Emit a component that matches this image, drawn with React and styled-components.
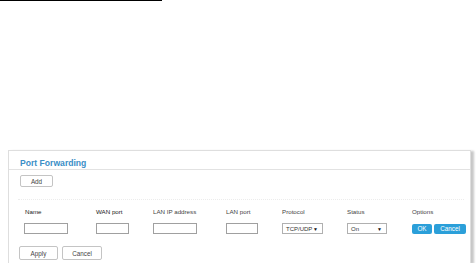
import React from "react";
import styled, { createGlobalStyle } from "styled-components";

const GlobalStyle = createGlobalStyle`
  html, body {
    margin: 0;
    padding: 0;
    background: #ffffff;
    font-family: "Liberation Sans", Arial, sans-serif;
    color: #444;
  }
`;

const TopRule = styled.div`
  width: 162px;
  height: 1px;
  background: #000;
`;

const Panel = styled.section`
  margin: 149px 0 0 8px;
  width: 463px;
  height: 113px;
  box-sizing: border-box;
  border: 1px solid #dedede;
  border-bottom: none;
  box-shadow: 3px 1px 2px rgba(0, 0, 0, 0.22);
  display: flex;
  flex-direction: column;
`;

const PanelHeader = styled.header`
  height: 19px;
  box-sizing: border-box;
  border-bottom: 1px solid #e2e2e2;
  padding: 7px 0 0 11px;
`;

const Title = styled.h2`
  margin: 0;
  font-size: 8.6px;
  line-height: 10px;
  font-weight: 600;
  color: #3a8ec6;
`;

const PanelBody = styled.div`
  display: flex;
  flex-direction: column;
  padding: 5px 0 0 11px;
`;

const Btn = styled.button`
  box-sizing: border-box;
  width: ${(p) => p.$w}px;
  height: ${(p) => p.$h}px;
  padding: 0;
  font-family: "Liberation Sans", Arial, sans-serif;
  font-size: 6.3px;
  color: #444;
  background: #fff;
  border: 1px solid #c4c4c4;
  border-radius: 2px;
`;

const Divider = styled.div`
  margin: 12px 6px 0 -2px;
  border-top: 1px dotted #ececec;
`;

const Grid = styled.div`
  display: grid;
  grid-template-columns: 72px 57px 73px 56px 65px 65px auto;
  grid-template-rows: 8px 11px;
  row-gap: 7px;
  align-items: center;
  margin: 8px 0 0 4px;
`;

const Label = styled.span`
  font-size: 6.2px;
  line-height: 8px;
  color: ${(p) => (p.$strong ? "#222" : "#444")};
  padding-left: ${(p) => (p.$first ? 1 : 0)}px;
`;

const Field = styled.input`
  box-sizing: border-box;
  width: ${(p) => p.$w}px;
  height: 11px;
  padding: 0;
  border: 1px solid #a0a0a0;
  background: #fff;
`;

const Select = styled.div`
  box-sizing: border-box;
  width: ${(p) => p.$w}px;
  height: 11px;
  border: 1px solid #b0b0b0;
  display: flex;
  align-items: center;
  justify-content: space-between;
  padding: 0 4px 0 3px;
  font-size: 6px;
  color: #333;
`;

const Caret = styled.span`
  font-size: 5px;
  color: #111;
`;

const Options = styled.div`
  display: flex;
  gap: 2px;
`;

const BlueBtn = styled.button`
  box-sizing: border-box;
  width: ${(p) => p.$w}px;
  height: 10px;
  padding: 0;
  border: none;
  border-radius: 2px;
  background: #2b9fd9;
  color: #fff;
  font-family: "Liberation Sans", Arial, sans-serif;
  font-size: 6.3px;
`;

const Actions = styled.div`
  display: flex;
  gap: 4px;
  margin: 12px 0 0 -1px;
`;

export default function App() {
  return (
    <>
      <GlobalStyle />
      <TopRule />
      <Panel>
        <PanelHeader>
          <Title>Port Forwarding</Title>
        </PanelHeader>
        <PanelBody>
          <Btn $w={33} $h={12}>Add</Btn>
          <Divider />
          <Grid>
            <Label $first $strong>Name</Label>
            <Label $strong>WAN port</Label>
            <Label>LAN IP address</Label>
            <Label>LAN port</Label>
            <Label>Protocol</Label>
            <Label>Status</Label>
            <Label>Options</Label>
            <Field $w={44} />
            <Field $w={33} />
            <Field $w={44} />
            <Field $w={32} />
            <Select $w={41}>
              TCP/UDP <Caret>▼</Caret>
            </Select>
            <Select $w={40}>
              On <Caret>▼</Caret>
            </Select>
            <Options>
              <BlueBtn $w={20}>OK</BlueBtn>
              <BlueBtn $w={32}>Cancel</BlueBtn>
            </Options>
          </Grid>
          <Actions>
            <Btn $w={39} $h={14}>Apply</Btn>
            <Btn $w={40} $h={14}>Cancel</Btn>
          </Actions>
        </PanelBody>
      </Panel>
    </>
  );
}
